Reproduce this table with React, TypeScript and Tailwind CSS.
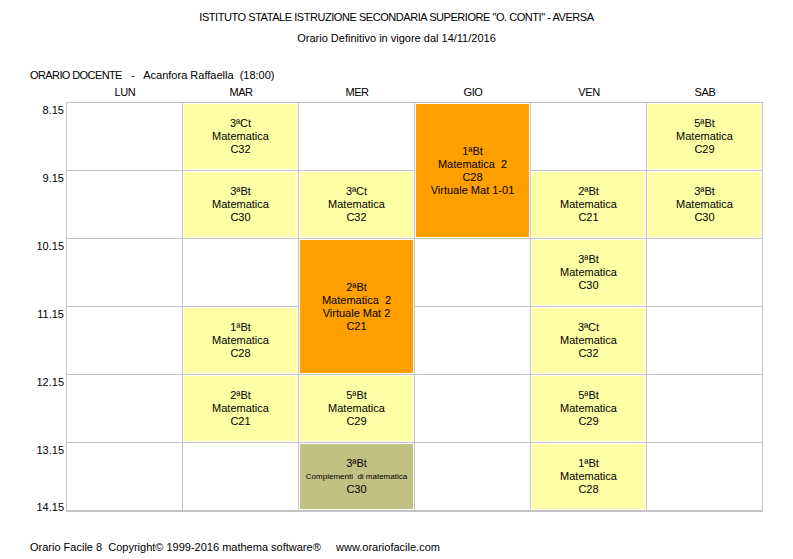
type Slot =
  | { kind: "empty" }
  | { kind: "lesson"; lines: string[]; color: "yellow" | "orange" | "olive"; span?: number; small?: number }

const DAYS = ["LUN", "MAR", "MER", "GIO", "VEN", "SAB"]
const TIMES = ["8.15", "9.15", "10.15", "11.15", "12.15", "13.15"]

const E: Slot = { kind: "empty" }
const mat = (cls: string, room: string): Slot => ({ kind: "lesson", color: "yellow", lines: [cls, "Matematica", room] })

const COLUMNS: Slot[][] = [
  [E, E, E, E, E, E],
  [mat("3ªCt", "C32"), mat("3ªBt", "C30"), E, mat("1ªBt", "C28"), mat("2ªBt", "C21"), E],
  [
    E,
    mat("3ªCt", "C32"),
    { kind: "lesson", color: "orange", span: 2, lines: ["2ªBt", "Matematica  2", "Virtuale Mat 2", "C21"] },
    mat("5ªBt", "C29"),
    { kind: "lesson", color: "olive", small: 1, lines: ["3ªBt", "Complementi  di matematica", "C30"] },
  ],
  [
    { kind: "lesson", color: "orange", span: 2, lines: ["1ªBt", "Matematica  2", "C28", "Virtuale Mat 1-01"] },
    E, E, E, E,
  ],
  [E, mat("2ªBt", "C21"), mat("3ªBt", "C30"), mat("3ªCt", "C32"), mat("5ªBt", "C29"), mat("1ªBt", "C28")],
  [mat("5ªBt", "C29"), mat("3ªBt", "C30"), E, E, E, E],
]

const fill = {
  yellow: "bg-[#ffffa6]",
  orange: "bg-[#ff9f00]",
  olive: "bg-[#c2c184]",
}

function Cell({ slot }: { slot: Slot }) {
  if (slot.kind === "empty") return <div className="h-[67px] bg-white" />
  const tall = slot.span === 2
  return (
    <div className={`${tall ? "h-[135px]" : "h-[67px]"} bg-white p-px`}>
      <div className={`h-full ${fill[slot.color]} flex flex-col items-center justify-center text-center leading-[13px]`}>
        {slot.lines.map((l, i) => (
          <div key={i} className={`whitespace-pre ${slot.small === i ? "text-[8px]" : ""}`}>
            {l}
          </div>
        ))}
      </div>
    </div>
  )
}

export default function App() {
  return (
    <div className="w-[793px] h-[559px] bg-white text-black text-[11px] leading-[13px] font-['Liberation_Sans',Arial,sans-serif] overflow-hidden">
      {/* Heading */}
      <div className="pt-[11px] text-center">
        <div className="tracking-[-0.45px]">ISTITUTO STATALE ISTRUZIONE SECONDARIA SUPERIORE "O. CONTI" - AVERSA</div>
        <div className="mt-[8px]">Orario Definitivo in vigore dal 14/11/2016</div>
      </div>

      <div className="mt-[24px] pl-[30px] whitespace-pre">
        <span className="tracking-[-0.6px]">ORARIO DOCENTE</span>   -   Acanfora Raffaella  (18:00)
      </div>

      {/* Day header */}
      <div className="flex pl-[67px] h-[20px] items-center">
        {DAYS.map((d) => (
          <div key={d} className="w-[116px] text-center tracking-[-0.4px]">{d}</div>
        ))}
      </div>

      {/* Timetable */}
      <div className="flex">
        <div className="w-[66px] flex flex-col pt-[2px]">
          {TIMES.map((t, i) => (
            <div key={t} className={`h-[68px] flex flex-col pr-[2px] text-right ${i === 5 ? "justify-between" : ""}`}>
              <div>{t}</div>
              {i === 5 && <div className="-mb-[2px]">14.15</div>}
            </div>
          ))}
        </div>
        <div className="grid grid-cols-[repeat(6,115px)] gap-px bg-[#c4c4c4] border border-[#c4c4c4]">
          {COLUMNS.map((col, ci) => (
            <div key={ci} className="flex flex-col gap-px">
              {col.map((s, si) => (
                <Cell key={si} slot={s} />
              ))}
            </div>
          ))}
        </div>
      </div>

      {/* Footer */}
      <div className="mt-[29px] pl-[30px] whitespace-pre">
        Orario Facile 8  Copyright© 1999-2016 mathema software®     www.orariofacile.com
      </div>
    </div>
  )
}
